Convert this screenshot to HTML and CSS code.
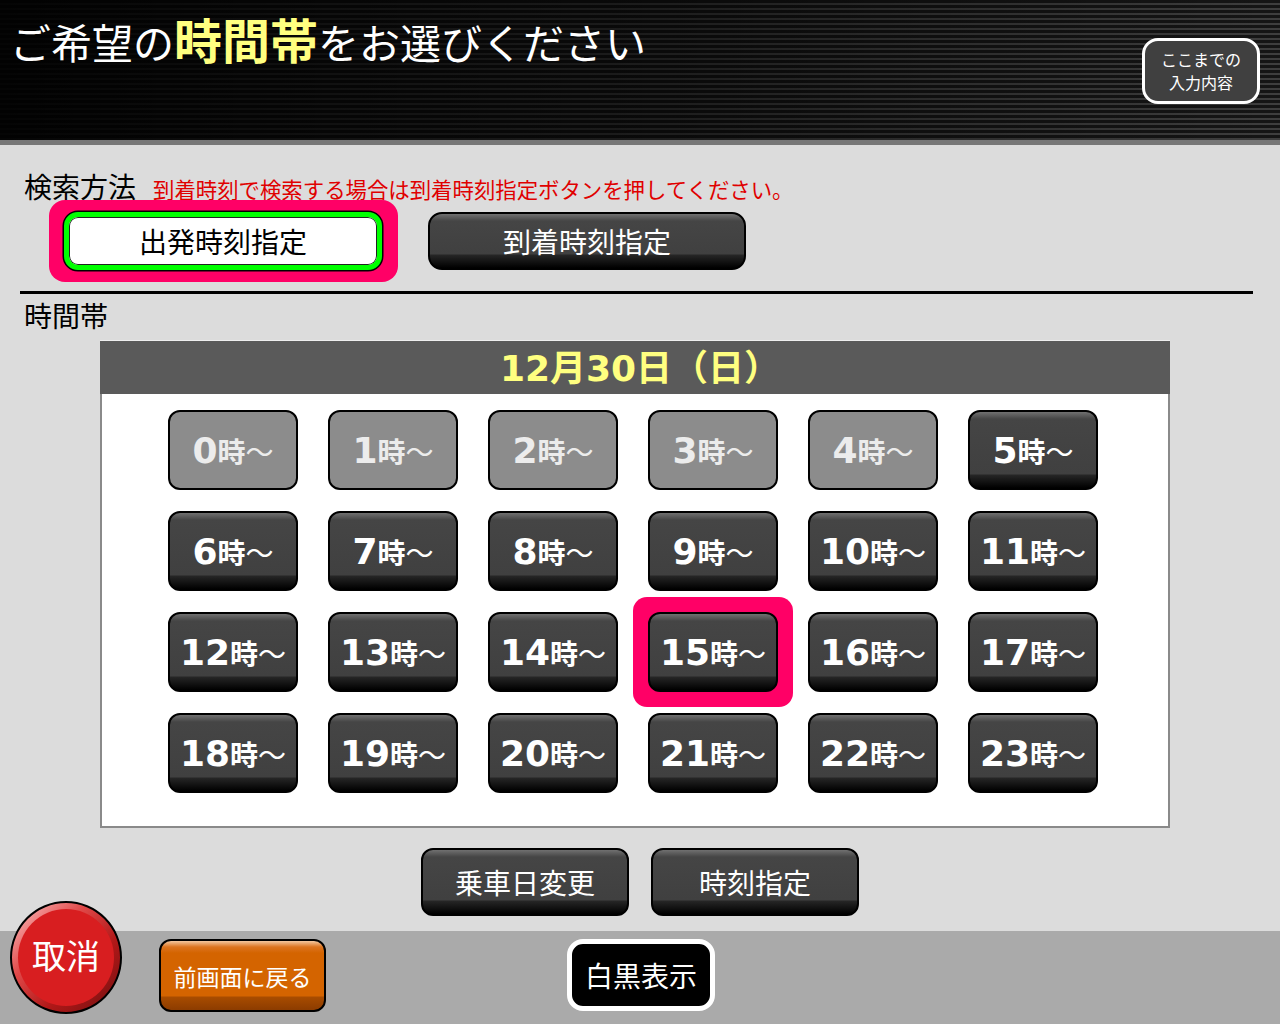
FILE: index.html
```html
<!DOCTYPE html>
<html lang="ja">
<head>
    <meta charset="UTF-8">
    <meta name="viewport" content="width=device-width, initial-scale=1.0">
    <title>時間帯選択</title>
    <link rel="stylesheet" href="styles.css">
</head>
<body>
    <header class="topbar">
        <h1 class="page-title">ご希望の<em>時間帯</em>をお選びください</h1>
        <button class="summary-btn">ここまでの<br>入力内容</button>
    </header>

    <main class="content">
        <div class="search-head">
            <span class="section-label">検索方法</span>
            <span class="notice">到着時刻で検索する場合は到着時刻指定ボタンを押してください。</span>
        </div>
        <div class="mode-row">
            <div class="selected-frame">
                <button class="mode-btn active">出発時刻指定</button>
            </div>
            <button class="mode-btn dark-btn">到着時刻指定</button>
        </div>

        <hr class="divider">
        <div class="section-label">時間帯</div>

        <section class="hour-panel">
            <h2 class="panel-date">12月30日（日）</h2>
            <div class="hour-grid">
                <button class="hour-btn disabled"><b>0</b><span class="unit">時</span><span class="tilde">～</span></button>
                <button class="hour-btn disabled"><b>1</b><span class="unit">時</span><span class="tilde">～</span></button>
                <button class="hour-btn disabled"><b>2</b><span class="unit">時</span><span class="tilde">～</span></button>
                <button class="hour-btn disabled"><b>3</b><span class="unit">時</span><span class="tilde">～</span></button>
                <button class="hour-btn disabled"><b>4</b><span class="unit">時</span><span class="tilde">～</span></button>
                <button class="hour-btn dark-btn"><b>5</b><span class="unit">時</span><span class="tilde">～</span></button>
                <button class="hour-btn dark-btn"><b>6</b><span class="unit">時</span><span class="tilde">～</span></button>
                <button class="hour-btn dark-btn"><b>7</b><span class="unit">時</span><span class="tilde">～</span></button>
                <button class="hour-btn dark-btn"><b>8</b><span class="unit">時</span><span class="tilde">～</span></button>
                <button class="hour-btn dark-btn"><b>9</b><span class="unit">時</span><span class="tilde">～</span></button>
                <button class="hour-btn dark-btn"><b>10</b><span class="unit">時</span><span class="tilde">～</span></button>
                <button class="hour-btn dark-btn"><b>11</b><span class="unit">時</span><span class="tilde">～</span></button>
                <button class="hour-btn dark-btn"><b>12</b><span class="unit">時</span><span class="tilde">～</span></button>
                <button class="hour-btn dark-btn"><b>13</b><span class="unit">時</span><span class="tilde">～</span></button>
                <button class="hour-btn dark-btn"><b>14</b><span class="unit">時</span><span class="tilde">～</span></button>
                <div class="hour-frame">
                    <button class="hour-btn dark-btn"><b>15</b><span class="unit">時</span><span class="tilde">～</span></button>
                </div>
                <button class="hour-btn dark-btn"><b>16</b><span class="unit">時</span><span class="tilde">～</span></button>
                <button class="hour-btn dark-btn"><b>17</b><span class="unit">時</span><span class="tilde">～</span></button>
                <button class="hour-btn dark-btn"><b>18</b><span class="unit">時</span><span class="tilde">～</span></button>
                <button class="hour-btn dark-btn"><b>19</b><span class="unit">時</span><span class="tilde">～</span></button>
                <button class="hour-btn dark-btn"><b>20</b><span class="unit">時</span><span class="tilde">～</span></button>
                <button class="hour-btn dark-btn"><b>21</b><span class="unit">時</span><span class="tilde">～</span></button>
                <button class="hour-btn dark-btn"><b>22</b><span class="unit">時</span><span class="tilde">～</span></button>
                <button class="hour-btn dark-btn"><b>23</b><span class="unit">時</span><span class="tilde">～</span></button>
            </div>
        </section>

        <div class="action-row">
            <button class="action-btn dark-btn">乗車日変更</button>
            <button class="action-btn dark-btn">時刻指定</button>
        </div>
    </main>

    <footer class="bottombar">
        <button class="cancel-btn"><span>取消</span></button>
        <button class="back-btn">前画面に戻る</button>
        <button class="mono-btn">白黒表示</button>
    </footer>
</body>
</html>
```

FILE: styles.css
```css
* {
    box-sizing: border-box;
}
body {
    margin: 0;
    width: 1280px;
    height: 1024px;
    overflow: hidden;
    background-color: #dcdcdc;
    font-family: "Noto Sans CJK JP", sans-serif;
    color: #000;
}
button {
    font-family: inherit;
    cursor: pointer;
    padding: 0;
}

/* header */
.topbar {
    height: 145px;
    display: flex;
    justify-content: space-between;
    align-items: flex-start;
    background-color: #111;
    background-image:
        linear-gradient(to right, rgba(0,0,0,0.92) 0%, rgba(0,0,0,0.55) 50%, rgba(0,0,0,0) 100%),
        repeating-linear-gradient(to bottom, #151515 0 3px, #3e3e3e 3px 5px);
    border-bottom: 5px solid #777;
}
.page-title {
    margin: 0;
    padding: 8px 0 0 10px;
    font-size: 41px;
    font-weight: normal;
    line-height: 60px;
    color: #fff;
    white-space: nowrap;
}
.page-title em {
    font-style: normal;
    font-weight: bold;
    font-size: 48px;
    color: #ffff80;
}
.summary-btn {
    width: 118px;
    height: 66px;
    margin: 38px 20px 0 0;
    background-color: #404040;
    border: 3px solid #fff;
    border-radius: 16px;
    color: #fff;
    font-size: 16px;
    line-height: 23.5px;
}

/* content */
.content {
    padding: 24px 20px 0;
}
.section-label {
    font-size: 28px;
    line-height: 34px;
    padding-left: 4px;
}
.search-head {
    display: flex;
    align-items: baseline;
    gap: 17px;
}
.notice {
    font-size: 21.4px;
    color: #e00000;
}
.mode-row {
    display: flex;
    align-items: center;
    gap: 30px;
    margin-top: -4px;
    padding-left: 29px;
}
.selected-frame {
    background-color: #ff0066;
    border-radius: 16px;
    padding: 12px 16px 12px 15px;
}
.mode-btn {
    width: 318px;
    height: 58px;
    border-radius: 14px;
    font-size: 28px;
}
.mode-btn.active {
    background-color: #fff;
    border: 5px solid #00ff00;
    box-shadow: 0 0 0 1.5px #000, inset 0 0 0 1px #222;
    color: #000;
}
.dark-btn {
    background: linear-gradient(to bottom, #707070 0, #454545 7px, #404040 calc(100% - 14px), #262626 calc(100% - 13px), #000 100%);
    border: 2px solid #000;
    color: #fff;
}
.divider {
    margin: 9px 7px 4px 0;
    border: none;
    height: 3px;
    background-color: #000;
}

/* hour panel */
.hour-panel {
    width: 1070px;
    margin: 8px 0 0 80px;
    background-color: #fff;
    border: 2px solid #8a8a8a;
    border-top: none;
}
.panel-date {
    margin: 0 -2px;
    height: 54px;
    background-color: #5a5a5a;
    border-top: 1px solid #eee;
    color: #ffff80;
    font-family: "DejaVu Sans", "Noto Sans CJK JP", sans-serif;
    font-size: 36px;
    font-weight: bold;
    line-height: 56px;
    text-align: center;
    padding-left: 10px;
}
.hour-grid {
    display: grid;
    grid-template-columns: repeat(6, 130px);
    grid-auto-rows: 80px;
    column-gap: 30px;
    row-gap: 21px;
    padding: 16px 0 33px 66px;
}
.hour-btn {
    width: 130px;
    height: 80px;
    border-radius: 12px;
    display: flex;
    align-items: baseline;
    justify-content: center;
    padding-top: 18px;
    color: #fff;
}
.hour-btn b {
    font-family: "DejaVu Sans", sans-serif;
    font-size: 36px;
    font-weight: bold;
}
.hour-btn .unit {
    font-size: 28px;
    font-weight: bold;
}
.hour-btn .tilde {
    font-size: 28px;
}
.hour-btn.disabled {
    background-color: #8c8c8c;
    border: 2px solid #000;
    color: #ececec;
}
.hour-frame {
    margin: -15px;
    padding: 15px;
    background-color: #ff0066;
    border-radius: 14px;
}

.action-row {
    display: flex;
    justify-content: center;
    gap: 22px;
    margin-top: 20px;
}
.action-btn {
    width: 208px;
    height: 68px;
    border-radius: 12px;
    font-size: 28px;
}

/* footer */
.bottombar {
    margin-top: 15px;
    height: 94px;
    background-color: #aaa;
    display: flex;
    align-items: flex-start;
    padding: 8px 0 0 10px;
}
.cancel-btn {
    width: 112px;
    height: 113px;
    margin-top: -38px;
    border: 2px solid #000;
    border-radius: 50%;
    background: linear-gradient(135deg, #ffc8c8 0%, #e04848 35%, #b01818 65%, #701010 100%);
    display: flex;
    align-items: center;
    justify-content: center;
}
.cancel-btn span {
    width: 96px;
    height: 97px;
    border-radius: 50%;
    background-color: #d81e20;
    color: #fff;
    font-size: 34px;
    line-height: 92px;
}
.back-btn {
    width: 167px;
    height: 73px;
    margin-left: 37px;
    border: 2px solid #000;
    border-radius: 12px;
    background: linear-gradient(to bottom, #f4c8a0 0, #dc7420 6px, #d46400 12px, #d46400 calc(100% - 14px), #a84c00 calc(100% - 13px), #8c3c00 100%);
    color: #fff;
    font-size: 23px;
}
.mono-btn {
    width: 148px;
    height: 72px;
    margin-left: 241px;
    border: 5px solid #fff;
    border-radius: 16px;
    background-color: #000;
    color: #fff;
    font-size: 28px;
}
```
